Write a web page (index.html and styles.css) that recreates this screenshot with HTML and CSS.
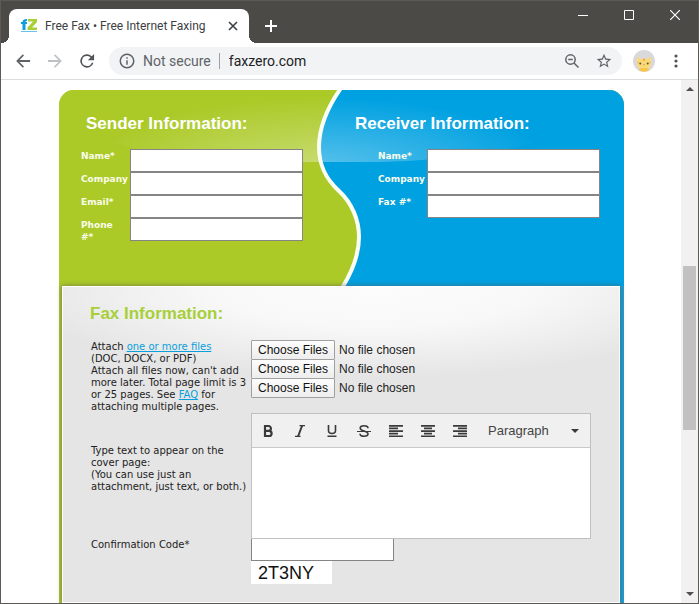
FILE: index.html
```html
<!DOCTYPE html>
<html lang="en">
<head>
<meta charset="utf-8">
<title>Free Fax • Free Internet Faxing</title>
<link rel="stylesheet" href="styles.css">
</head>
<body>
<header class="titlebar">
  <div class="tab">
    <svg class="favicon" width="16" height="14" viewBox="0 0 16 14" aria-hidden="true">
      <path d="M1.500 11V5H0V3h1.500c0-2 1.500-3 4.500-3v2C4.800 2 4.500 2.300 4.500 3H6v2H4.500v6z" fill="#0a9fdc"/>
      <path d="M7 0h9v3L11 8.500h5V11H6.500V8.500L12 2.500H7z" fill="#a8cf38"/>
      <path d="M0 12h16v1H0z" fill="#6cc4e4"/>
    </svg>
    <span class="tab-title">Free Fax • Free Internet Faxing</span>
    <button class="icon-btn" aria-label="Close tab"><svg width="10" height="10" viewBox="0 0 10 10"><path d="M1 1l8 8M9 1L1 9" stroke="#3c4043" stroke-width="1.600"/></svg></button>
  </div>
  <button class="icon-btn new-tab" aria-label="New tab"><svg width="12" height="12" viewBox="0 0 12 12"><path d="M6 0v12M0 6h12" stroke="#fff" stroke-width="2"/></svg></button>
  <div class="window-buttons">
    <button class="icon-btn" aria-label="Minimize"><svg width="10" height="10" viewBox="0 0 10 10"><path d="M0 5.500h10" stroke="#fff"/></svg></button>
    <button class="icon-btn" aria-label="Maximize"><svg width="10" height="10" viewBox="0 0 10 10"><path d="M.5.5h9v9h-9z" stroke="#fff" fill="none"/></svg></button>
    <button class="icon-btn" aria-label="Close"><svg width="10" height="10" viewBox="0 0 10 10"><path d="M0 0l10 10M10 0L0 10" stroke="#fff" stroke-width="1.200"/></svg></button>
  </div>
</header>
<nav class="toolbar">
  <button class="icon-btn nav-btn" aria-label="Back"><svg width="20" height="20" viewBox="0 0 24 24"><path fill="#5f6368" d="M20.500 10.800H7.800l5.400-5.400L11.800 4l-8 8 8 8 1.400-1.400-5.400-5.400h12.700z"/></svg></button>
  <button class="icon-btn nav-btn" aria-label="Forward"><svg width="20" height="20" viewBox="0 0 24 24"><path fill="#bdc1c6" d="M12.200 4l-1.400 1.400 5.400 5.400H3.500v2.400h12.700l-5.400 5.400 1.400 1.400 8-8z"/></svg></button>
  <button class="icon-btn nav-btn" aria-label="Reload"><svg width="20" height="20" viewBox="0 0 24 24"><path fill="#505459" d="M17.650 6.350A8 8 0 1 0 19.730 14h-2.080A6 6 0 1 1 12 6c1.660 0 3.140.69 4.220 1.780L13 11h7.500V3.500z"/></svg></button>
  <div class="omnibox">
    <svg width="18" height="18" viewBox="0 0 24 24" aria-hidden="true"><path fill="#5f6368" d="M11 7h2v2h-2zm0 4h2v6h-2zm1-9a10 10 0 1 0 0 20 10 10 0 0 0 0-20zm0 18a8 8 0 1 1 0-16 8 8 0 0 1 0 16z"/></svg>
    <span class="security">Not secure</span>
    <input class="url" aria-label="Address" value="faxzero.com">
    <button class="icon-btn" aria-label="Zoom"><svg width="14" height="14" viewBox="0 0 14 14" fill="none" stroke="#5f6368" stroke-width="1.500"><circle cx="5.500" cy="5.500" r="4.700"/><path d="M9 9l4.500 4.500M3.200 5.500h4.600"/></svg></button>
    <button class="icon-btn" aria-label="Bookmark"><svg width="16" height="16" viewBox="1 1 22 22"><path fill="#5f6368" d="M22 9.240l-7.190-.62L12 2 9.190 8.630 2 9.240l5.460 4.730L5.820 21 12 17.270 18.180 21l-1.630-7.030zM12 15.400l-3.760 2.270 1-4.280-3.320-2.880 4.380-.38L12 6.100l1.710 4.040 4.380.38-3.320 2.880 1 4.280z"/></svg></button>
  </div>
  <button class="icon-btn avatar" aria-label="Profile"><svg width="22" height="22" viewBox="0 0 22 22">
    <circle cx="11" cy="11" r="11" fill="#d9d9dc"/>
    <path d="M4.500 6.500L8 9h6l3.500-2.500.5 7c0 2-1 3.500-2.500 4.300v2.700a11 11 0 0 1-9 0v-2.700C5 17 4 15.500 4 13.500z" fill="#fbd977"/>
    <path d="M6 19l2-1h6l2 1-.5 1.500a11 11 0 0 1-9 0z" fill="#f8c64a"/>
    <path d="M10 9l1 2 1-2zM4.200 12.500l2 .4M17.800 12.500l-2 .4" stroke="#eca73a" fill="#eca73a" stroke-width=".7"/>
    <circle cx="7.300" cy="13.500" r="1" fill="#5b5542"/><circle cx="14.700" cy="13.500" r="1" fill="#5b5542"/>
    <path d="M10 14.500h2l-1 1z" fill="#b56f3b"/>
  </svg></button>
  <button class="icon-btn menu" aria-label="Menu"><svg width="4" height="14" viewBox="0 0 4 14" fill="#505459"><circle cx="2" cy="2" r="1.600"/><circle cx="2" cy="7" r="1.600"/><circle cx="2" cy="12" r="1.600"/></svg></button>
</nav>
<div class="viewport">
  <main class="page">
    <form class="card">
      <div class="parties">
        <svg class="wave" viewBox="0 0 565 196" preserveAspectRatio="none" aria-hidden="true">
          <defs>
            <radialGradient id="gloss" gradientUnits="userSpaceOnUse" cx="0" cy="0" r="1" gradientTransform="translate(262 76) scale(230 68)">
              <stop offset="0" stop-color="#fff" stop-opacity=".34"/>
              <stop offset="1" stop-color="#fff" stop-opacity="0"/>
            </radialGradient>
          </defs>
          <path fill="#abca28" d="M0 0h565v196H0z"/>
          <path fill="#00a1e1" d="M281 0C268 18 260 37 260 57C260 76 267 89 280 101C293 113 300 130 300 147C300 165 293 182 284 196H565V0z"/>
          <path fill="url(#gloss)" d="M28 42Q90 72 200 72H320Q440 70 540 35V0H28z"/>
          <path fill="none" stroke="#fbfdf3" stroke-width="4" d="M282-2C268 18 260 37 260 57C260 76 267 89 280 101C293 113 300 130 300 147C300 165 293 182 283 198"/>
        </svg>
        <section class="party">
          <h2>Sender Information:</h2>
          <div class="fields">
            <label for="s-name">Name*</label><input id="s-name">
            <label for="s-company">Company</label><input id="s-company">
            <label for="s-email">Email*</label><input id="s-email">
            <label for="s-phone">Phone<br>#*</label><input id="s-phone">
          </div>
        </section>
        <section class="party receiver">
          <h2>Receiver Information:</h2>
          <div class="fields">
            <label for="r-name">Name*</label><input id="r-name">
            <label for="r-company">Company</label><input id="r-company">
            <label for="r-fax">Fax #*</label><input id="r-fax">
          </div>
        </section>
      </div>
      <section class="fax">
        <h2>Fax Information:</h2>
        <div class="fax-grid">
          <div class="note attach">Attach <a href="#files">one or more files</a><br>(DOC, DOCX, or PDF)<br>Attach all files now, can't add<br>more later. Total page limit is 3<br>or 25 pages. See <a href="#faq">FAQ</a> for<br>attaching multiple pages.</div>
          <div class="files">
            <input type="file" multiple aria-label="First attachment">
            <input type="file" multiple aria-label="Second attachment">
            <input type="file" multiple aria-label="Third attachment">
          </div>
          <label class="note cover-label" for="cover">Type text to appear on the<br>cover page:<br>(You can use just an<br>attachment, just text, or both.)</label>
          <div class="editor">
            <div class="tools">
              <button type="button" aria-label="Bold"><svg viewBox="0 0 16 16"><path fill="none" stroke="#3a3a3a" stroke-width="2.200" d="M5 3h3.500a2.300 2.300 0 0 1 0 4.800H5m0 0h4a2.600 2.600 0 0 1 0 5.200H5zM5 2v12"/></svg></button>
              <button type="button" aria-label="Italic"><svg viewBox="0 0 16 16"><path fill="none" stroke="#3a3a3a" stroke-width="1.200" d="M7.500 2.600H13M3 13.400h5.500"/><path stroke="#3a3a3a" stroke-width="2" d="M10.200 2.500L6 13.500"/></svg></button>
              <button type="button" aria-label="Underline"><svg viewBox="0 0 16 16"><path fill="none" stroke="#3a3a3a" stroke-width="1.600" d="M4.500 2v5.500a3.500 3 0 0 0 7 0V2"/><path fill="#3a3a3a" d="M3.500 12.500h9V14h-9z"/></svg></button>
              <button type="button" aria-label="Strikethrough"><svg viewBox="0 0 16 16"><path fill="none" stroke="#3a3a3a" stroke-width="1.600" d="M12 5.200C12 3.500 10.300 2.700 8 2.700S4.200 3.600 4.200 5.200C4.200 8.300 12 7.500 12 10.800c0 1.700-1.700 2.500-4 2.500s-4-.8-4-2.500"/><path stroke="#3a3a3a" stroke-width="1" d="M1 8.500h14"/></svg></button>
              <button type="button" aria-label="Align left"><svg viewBox="0 0 16 16"><path fill="#3a3a3a" d="M1 2h14v1.700H1zm0 2.600h9v1.700H1zm0 2.600h14v1.700H1zm0 2.600h9v1.700H1zm0 2.600h14v1.700H1z"/></svg></button>
              <button type="button" aria-label="Align center"><svg viewBox="0 0 16 16"><path fill="#3a3a3a" d="M1 2h14v1.700H1zm3 2.600h8v1.700H4zM1 7.200h14v1.700H1zm3 2.600h8v1.700H4zm-3 2.600h14v1.700H1z"/></svg></button>
              <button type="button" aria-label="Align right"><svg viewBox="0 0 16 16"><path fill="#3a3a3a" d="M1 2h14v1.700H1zm5 2.600h9v1.700H6zM1 7.200h14v1.700H1zm5 2.600h9v1.700H6zm-5 2.600h14v1.700H1z"/></svg></button>
              <div class="format">
                <select aria-label="Text format"><option>Paragraph</option></select>
                <svg class="caret" viewBox="0 0 8 4" aria-hidden="true"><path fill="#3a3a3a" d="M0 0h8L4 4z"/></svg>
              </div>
            </div>
            <textarea id="cover"></textarea>
          </div>
          <label class="note" for="code">Confirmation Code*</label>
          <div class="code">
            <input id="code">
            <div class="captcha">2T3NY</div>
          </div>
        </div>
      </section>
    </form>
  </main>
  <div class="scrollbar">
    <svg width="8" height="4" viewBox="0 0 8 4" aria-hidden="true"><path fill="#505050" d="M4 0l4 4H0z"/></svg>
    <div class="track"><div class="thumb"></div></div>
    <svg width="8" height="4" viewBox="0 0 8 4" aria-hidden="true"><path fill="#505050" d="M0 0h8L4 4z"/></svg>
  </div>
</div>
</body>
</html>
```
FILE: styles.css
```css
* { box-sizing: border-box; }

body {
  margin: 0;
  min-height: 100vh;
  display: flex;
  flex-direction: column;
  border: 1px solid #5c5a57;
  background: #fff;
  font-family: "DejaVu Sans", sans-serif;
}

svg { display: block; flex: none; }

.icon-btn {
  display: flex;
  align-items: center;
  justify-content: center;
  flex: none;
  padding: 0;
  border: 0;
  background: none;
}

/* Browser window */
.titlebar {
  display: flex;
  height: 42px;
  padding: 8px 18px 0 8px;
  background: #4b4a47;
}

.tab {
  position: relative;
  display: flex;
  align-items: center;
  width: 240px;
  padding: 0 11px 0 12px;
  border-radius: 8px 8px 0 0;
  background: #fff;
}

.tab::before,
.tab::after {
  content: "";
  position: absolute;
  bottom: 0;
  width: 8px;
  height: 8px;
}

.tab::before { left: -8px; background: radial-gradient(circle at 0 0, #4b4a47 8px, #fff 8px); }
.tab::after { right: -8px; background: radial-gradient(circle at 100% 0, #4b4a47 8px, #fff 8px); }

.tab-title {
  flex: 1;
  padding-left: 8px;
  font: 12px/16px Roboto, sans-serif;
  color: #3c4043;
  white-space: nowrap;
}

.new-tab { width: 44px; }

.window-buttons {
  display: flex;
  gap: 36px;
  height: 12px;
  margin-left: auto;
}

.toolbar {
  display: flex;
  align-items: center;
  height: 37px;
  padding: 0 20px 0 6px;
  border-bottom: 1px solid #dadce0;
}

.nav-btn { width: 32px; }

.omnibox {
  display: flex;
  align-items: center;
  flex: 1;
  min-width: 0;
  height: 28px;
  margin: 0 11px 0 6px;
  padding: 0 10px 0 9px;
  border-radius: 14px;
  background: #f1f3f4;
  font: 14px/18px Roboto, sans-serif;
}

.security {
  padding: 0 8px 0 7px;
  color: #5f6368;
  white-space: nowrap;
}

.url {
  flex: 1;
  min-width: 0;
  height: 16px;
  padding: 0 0 0 9px;
  border: 0;
  border-left: 1px solid #9aa0a6;
  background: none;
  font: inherit;
  color: #202124;
}

.omnibox .icon-btn + .icon-btn { margin-left: 17px; }
.menu { margin-left: 19px; }

.viewport { display: flex; flex: 1; }

.page {
  display: flex;
  flex: 1;
  justify-content: center;
  min-width: 0;
  padding: 10px 57px 0 58px;
}

.scrollbar {
  display: flex;
  flex-direction: column;
  align-items: center;
  width: 17px;
  padding: 7px 0;
  background: #f1f1f1;
}

.track { flex: 1; width: 13px; padding: 175px 0 152px; }
.thumb { height: 164px; background: #c1c1c1; }

/* Fax form */
.card {
  display: flex;
  flex-direction: column;
  flex: 1;
  max-width: 640px;
  border-radius: 15px 15px 0 0;
  background: linear-gradient(90deg, #a9c62e 50%, #1a9fd2 50%);
}

h2 {
  margin: 0;
  font: bold 17px/20px "Liberation Sans", sans-serif;
}

.parties {
  position: relative;
  display: grid;
  grid-template-columns: 274fr 247fr;
  min-height: 196px;
  padding: 24px 22px 0;
  border-radius: 15px 15px 0 0;
  overflow: hidden;
  color: #fff;
}

.wave {
  position: absolute;
  inset: 0;
  width: 100%;
  height: 100%;
}

.party { position: relative; }
.party h2 { padding-left: 5px; }
.party.receiver h2 { padding-left: 0; }
.receiver .fields { padding-left: 23px; }

.fields {
  display: grid;
  grid-template-columns: 49px 173px;
  grid-auto-rows: 23px;
  padding-top: 15px;
  font: bold 9px/12px "DejaVu Sans", sans-serif;
}

.fields label { padding-top: 1px; color: #fafceb; }

.fields input {
  width: 100%;
  height: 23px;
  border: 1px solid #858585;
  background: #fff;
}

.fax {
  position: relative;
  flex: 1;
  margin: 0 4px 0 3px;
  padding: 17px 27px 18px;
  border: 1px solid #fff;
  background: radial-gradient(ellipse 66% 90px at 56% 0, #fcfcfc, #f8f8f9 45%, #e5e5e5) #e5e5e5;
  box-shadow: 0 0 5px rgba(90, 80, 80, .7);
}

.fax h2 { color: #a8cf38; }

.fax-grid {
  display: grid;
  grid-template-columns: 160px minmax(0, 340px);
  padding: 16px 0 0 1px;
}

.note {
  font: 10px/12px "DejaVu Sans", sans-serif;
  color: #222;
  white-space: nowrap;
}

.note a { color: #0a9fdc; }
.attach { padding-top: 1px; }
.cover-label { padding-top: 32px; }

.files {
  display: flex;
  flex-direction: column;
  height: 72px;
}

.files input {
  height: 19px;
  font: 12px/17px "Liberation Sans", sans-serif;
  color: #222;
}

.files input:last-child { height: 20px; }

.files input::file-selector-button {
  height: 20px;
  margin: 0 4px 0 0;
  padding: 0 6px;
  border: 1px solid #a0a0a0;
  border-radius: 1px;
  background: linear-gradient(#fdfdfd, #ededed);
  font: 12px/17px "Liberation Sans", sans-serif;
  color: #111;
}

.editor { border: 1px solid #c0c0c0; background: #fff; }

.tools {
  display: flex;
  align-items: center;
  height: 34px;
  border-bottom: 1px solid #c8c8c8;
  background: #f0f0f0;
}

.tools button {
  display: flex;
  justify-content: center;
  width: 32px;
  padding: 0;
  border: 0;
  background: none;
}

.tools button svg { width: 16px; height: 16px; }

.format {
  flex: 1;
  display: flex;
  align-items: center;
  padding: 0 11px 0 12px;
}

.format select {
  appearance: none;
  flex: 1;
  min-width: 0;
  padding: 0;
  border: 0;
  background: none;
  font: 13px/16px "Liberation Sans", sans-serif;
  color: #444;
}

.caret { width: 8px; height: 4px; }

.editor textarea {
  display: block;
  width: 100%;
  height: 90px;
  border: 0;
  resize: none;
}

.code input {
  display: block;
  width: 143px;
  height: 22px;
  border: 1px solid #858585;
  border-top: 0;
  background: #fff;
}

.captcha {
  width: 81px;
  height: 23px;
  padding-left: 7px;
  background: #fff;
  font: 18px/24px "Liberation Sans", sans-serif;
  color: #111;
}
```
